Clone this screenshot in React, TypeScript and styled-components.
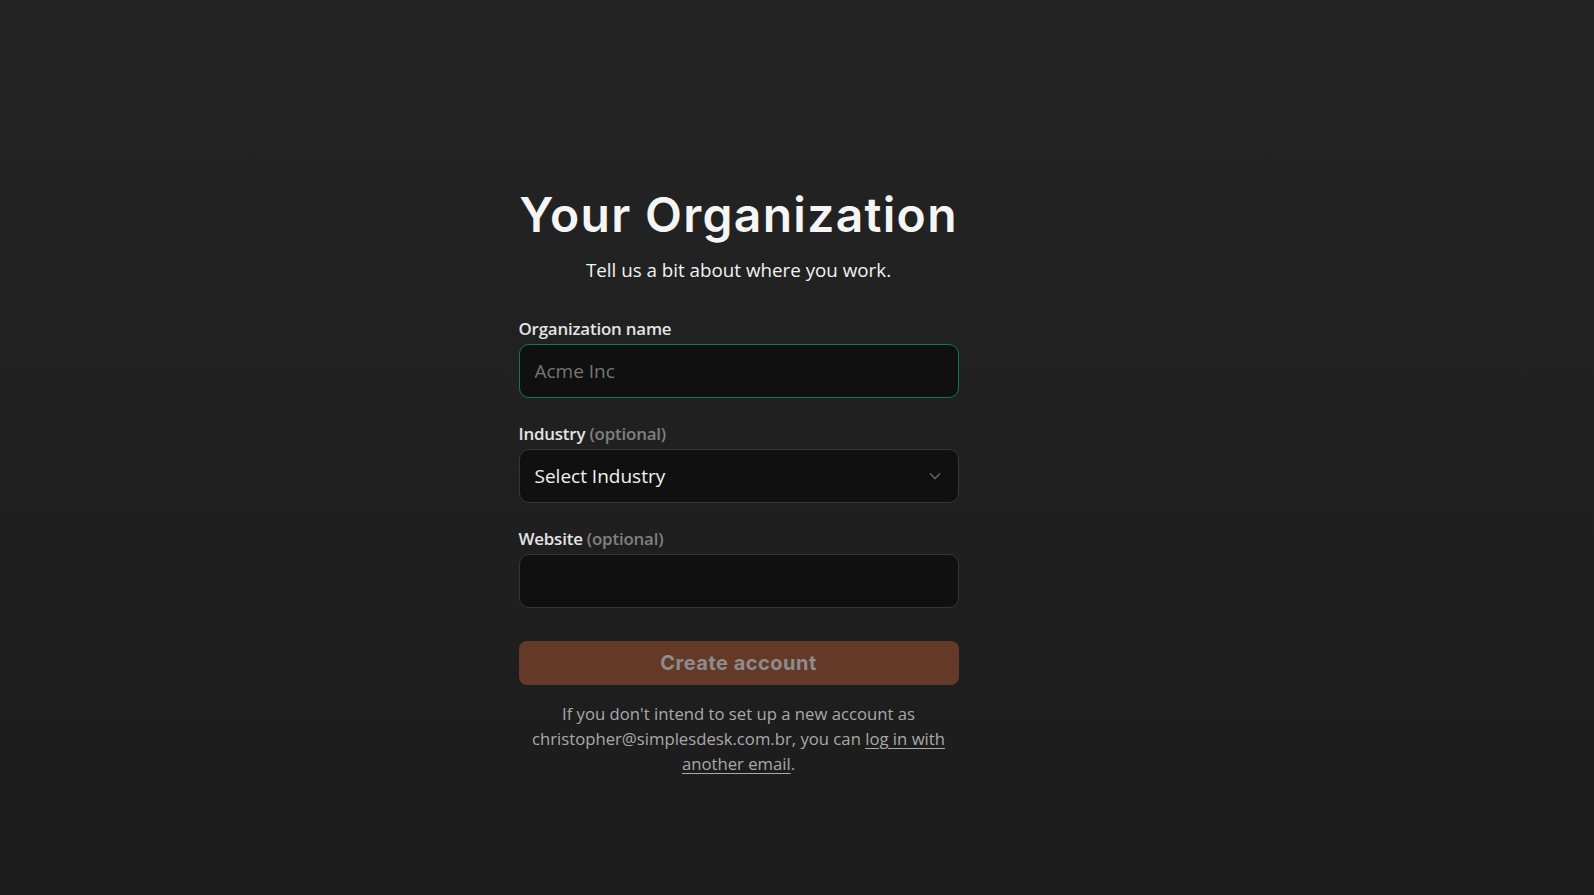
import React from "react";
import styled, { createGlobalStyle } from "styled-components";

const GlobalStyle = createGlobalStyle`
  html, body {
    margin: 0;
    padding: 0;
    height: 100%;
  }
  body {
    background: linear-gradient(180deg, #242424 0%, #1c1c1c 100%);
    font-family: "Open Sans", "Noto Sans", sans-serif;
    color: #f2f2f2;
  }
  #root {
    min-height: 100vh;
  }
`;

const Page = styled.main`
  min-height: 895px;
  box-sizing: border-box;
  display: flex;
  justify-content: center;
  padding: 186px 117px 0 0;
`;

const Column = styled.div`
  width: 440px;
  display: flex;
  flex-direction: column;
`;

const Title = styled.h1`
  margin: 0;
  font-family: Inter, sans-serif;
  font-weight: 600;
  font-size: 48px;
  line-height: 57px;
  letter-spacing: 1.3px;
  text-align: center;
  white-space: nowrap;
  color: #f5f5f5;
`;

const Subtitle = styled.p`
  margin: 14px 0 0;
  font-size: 18.8px;
  line-height: 26px;
  text-align: center;
  color: #f2f2f2;
`;

const Form = styled.form`
  margin-top: 35px;
  display: flex;
  flex-direction: column;
`;

const Field = styled.div`
  display: flex;
  flex-direction: column;
  gap: 5px;
  margin-bottom: 25px;
`;

const Label = styled.label`
  font-size: 16.9px;
  line-height: 21px;
  font-weight: 600;
  color: #e4e4e4;
  letter-spacing: -0.2px;
`;

const Optional = styled.span`
  color: #808080;
`;

const Input = styled.input<{ $focused?: boolean }>`
  box-sizing: border-box;
  width: 100%;
  height: 54px;
  padding: 0 15px;
  border-radius: 10px;
  border: 1px solid ${(p) => (p.$focused ? "#0b7a55" : "#363636")};
  background: #101010;
  color: #f2f2f2;
  font-family: "Open Sans", sans-serif;
  font-size: 19px;
  outline: none;
  &::placeholder {
    color: #767676;
  }
`;

const SelectBox = styled.div`
  box-sizing: border-box;
  height: 54px;
  padding: 0 15px;
  border-radius: 10px;
  border: 1px solid #363636;
  background: #101010;
  display: flex;
  align-items: center;
  justify-content: space-between;
  font-size: 19px;
  color: #f2f2f2;
`;

const Chevron = styled.svg`
  width: 12px;
  height: 8px;
  margin-right: 2px;
`;

const Button = styled.button`
  margin-top: 8px;
  height: 44px;
  border: none;
  border-radius: 8px;
  background: #653927;
  color: #8c8c8c;
  font-family: Inter, sans-serif;
  font-weight: 700;
  font-size: 20px;
  letter-spacing: 0.5px;
  cursor: not-allowed;
`;

const Note = styled.p`
  margin: 16px auto 0;
  width: 420px;
  font-size: 16.7px;
  line-height: 25px;
  text-align: center;
  color: #a9a9a9;
`;

const NoteLink = styled.a`
  color: #a9a9a9;
  text-decoration: underline;
  text-underline-offset: 3px;
`;

export default function App() {
  return (
    <>
      <GlobalStyle />
      <Page>
        <Column>
          <Title>Your Organization</Title>
          <Subtitle>Tell us a bit about where you work.</Subtitle>
          <Form onSubmit={(e) => e.preventDefault()}>
            <Field>
              <Label>Organization name</Label>
              <Input $focused placeholder="Acme Inc" />
            </Field>
            <Field>
              <Label>
                Industry <Optional>(optional)</Optional>
              </Label>
              <SelectBox>
                <span>Select Industry</span>
                <Chevron viewBox="0 0 12 8" fill="none">
                  <path d="M1 1.5 L6 6.5 L11 1.5" stroke="#6a6a6a" strokeWidth="1.3" />
                </Chevron>
              </SelectBox>
            </Field>
            <Field>
              <Label>
                Website <Optional>(optional)</Optional>
              </Label>
              <Input />
            </Field>
            <Button type="submit">Create account</Button>
          </Form>
          <Note>
            If you don't intend to set up a new account as christopher@simplesdesk.com.br, you can{" "}
            <NoteLink href="#">log in with another email</NoteLink>.
          </Note>
        </Column>
      </Page>
    </>
  );
}
